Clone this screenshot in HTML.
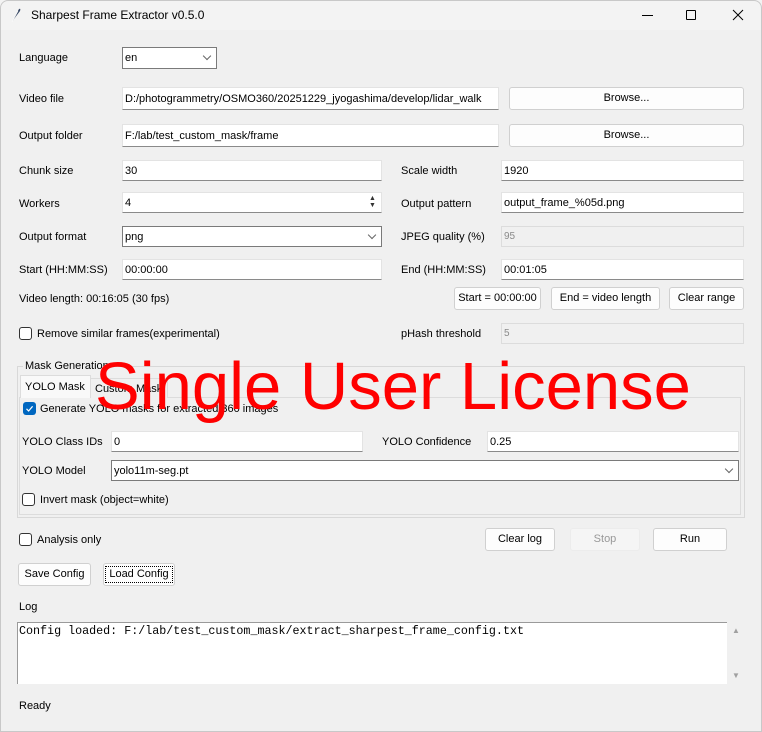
<!DOCTYPE html>
<html><head><meta charset="utf-8"><style>
*{box-sizing:border-box;margin:0;padding:0}
body{width:762px;height:732px;background:#f0f0f0;font-family:"Liberation Sans",sans-serif;font-size:11px;color:#000;position:relative;overflow:hidden}
.a{position:absolute;white-space:nowrap}
.l{position:absolute;white-space:nowrap;line-height:14px}
.e{position:absolute;background:#fff;border:1px solid #e3e3e3;border-bottom:1px solid #8a8a8a;padding-left:2px;padding-top:1px;line-height:18px;font-size:11px;overflow:hidden;white-space:nowrap}
.d{background:#f0f0f0;border:1px solid #dcdcdc;color:#8a8a8a}
.c{position:absolute;background:#fff;border:1px solid #7a7a7a;padding-left:2px;padding-top:1px;line-height:18px;overflow:hidden;white-space:nowrap}
.c:after{content:"";position:absolute;right:6px;top:5px;width:5px;height:5px;border-right:1px solid #666;border-bottom:1px solid #666;transform:rotate(45deg)}
.b{position:absolute;background:#fdfdfd;border:1px solid #d0d0d0;border-radius:3px;text-align:center;line-height:21px;white-space:nowrap}
.cb{position:absolute;width:13px;height:13px;border:1px solid #333;border-radius:3px;background:#fff}
</style></head><body>
<div class="a" style="left:0;top:0;width:762px;height:30px;background:#f3f3f3"></div>
<svg class="a" style="left:10px;top:7px" width="12" height="16" viewBox="0 0 12 16"><path d="M2 15 L9 2 Q11 1 10 4 L4 12 Z" fill="#3a4a66"/><path d="M2 15 L8 4" stroke="#fff" stroke-width="0.6"/></svg>
<div class="l" style="left:31px;top:8px;font-size:12px">Sharpest Frame Extractor v0.5.0</div>
<div class="a" style="left:642px;top:15px;width:11px;height:1px;background:#000"></div>
<div class="a" style="left:686px;top:10px;width:10px;height:10px;border:1px solid #000;border-radius:1px"></div>
<svg class="a" style="left:732px;top:9px" width="12" height="12"><path d="M1 1L11 11M11 1L1 11" stroke="#000" stroke-width="1"/></svg>

<div class="l" style="left:19px;top:51px">Language</div>
<div class="c" style="left:122px;top:47px;width:95px;height:22px">en</div>

<div class="l" style="left:19px;top:92px">Video file</div>
<div class="e" style="left:122px;top:87px;width:377px;height:23px;line-height:20px">D:/photogrammetry/OSMO360/20251229_jyogashima/develop/lidar_walk</div>
<div class="b" style="left:509px;top:87px;width:235px;height:23px">Browse...</div>

<div class="l" style="left:19px;top:129px">Output folder</div>
<div class="e" style="left:122px;top:124px;width:377px;height:23px;line-height:20px">F:/lab/test_custom_mask/frame</div>
<div class="b" style="left:509px;top:124px;width:235px;height:23px">Browse...</div>

<div class="l" style="left:19px;top:164px">Chunk size</div>
<div class="e" style="left:122px;top:160px;width:260px;height:21px">30</div>
<div class="l" style="left:401px;top:164px">Scale width</div>
<div class="e" style="left:501px;top:160px;width:243px;height:21px">1920</div>

<div class="l" style="left:19px;top:197px">Workers</div>
<div class="e" style="left:122px;top:192px;width:260px;height:21px">4</div>
<div class="a" style="left:369px;top:195px;font-size:7px;line-height:7px;color:#333">▲<br>▼</div>
<div class="l" style="left:401px;top:197px">Output pattern</div>
<div class="e" style="left:501px;top:192px;width:243px;height:21px">output_frame_%05d.png</div>

<div class="l" style="left:19px;top:230px">Output format</div>
<div class="c" style="left:122px;top:226px;width:260px;height:21px">png</div>
<div class="l" style="left:401px;top:230px">JPEG quality (%)</div>
<div class="e d" style="left:501px;top:226px;width:243px;height:21px;font-size:10px">95</div>

<div class="l" style="left:19px;top:263px">Start (HH:MM:SS)</div>
<div class="e" style="left:122px;top:259px;width:260px;height:21px">00:00:00</div>
<div class="l" style="left:401px;top:263px">End (HH:MM:SS)</div>
<div class="e" style="left:501px;top:259px;width:243px;height:21px">00:01:05</div>

<div class="l" style="left:19px;top:292px">Video length: 00:16:05 (30 fps)</div>
<div class="b" style="left:454px;top:287px;width:87px;height:23px">Start = 00:00:00</div>
<div class="b" style="left:551px;top:287px;width:109px;height:23px">End = video length</div>
<div class="b" style="left:669px;top:287px;width:75px;height:23px">Clear range</div>

<div class="cb" style="left:19px;top:327px"></div>
<div class="l" style="left:37px;top:327px">Remove similar frames(experimental)</div>
<div class="l" style="left:401px;top:327px">pHash threshold</div>
<div class="e d" style="left:501px;top:323px;width:243px;height:21px;font-size:10px">5</div>

<div class="a" style="left:17px;top:366px;width:728px;height:152px;border:1px solid #d8d8d8"></div>
<div class="l" style="left:23px;top:359px;background:#f0f0f0;padding:0 2px">Mask Generation</div>
<div class="a" style="left:19px;top:397px;width:722px;height:118px;border:1px solid #dcdcdc;background:#f0f0f0"></div>
<div class="a" style="left:90px;top:378px;width:78px;height:20px;border:1px solid #dcdcdc;border-bottom:none;background:#f0f0f0"></div>
<div class="l" style="left:95px;top:382px">Custom Mask</div>
<div class="a" style="left:20px;top:375px;width:71px;height:23px;border:1px solid #dcdcdc;border-bottom:none;background:#f9f9f9"></div>
<div class="l" style="left:25px;top:380px">YOLO Mask</div>
<div class="a" style="left:23px;top:402px;width:13px;height:13px;border-radius:3px;background:#0067c0"></div>
<svg class="a" style="left:23px;top:402px" width="13" height="13"><path d="M3.5 6.8L5.6 9L9.6 4.3" stroke="#fff" stroke-width="1.2" fill="none"/></svg>
<div class="l" style="left:40px;top:402px">Generate YOLO masks for extracted 360 images</div>

<div class="l" style="left:22px;top:435px">YOLO Class IDs</div>
<div class="e" style="left:111px;top:431px;width:252px;height:21px">0</div>
<div class="l" style="left:382px;top:435px">YOLO Confidence</div>
<div class="e" style="left:487px;top:431px;width:252px;height:21px">0.25</div>
<div class="l" style="left:22px;top:464px">YOLO Model</div>
<div class="c" style="left:111px;top:460px;width:628px;height:21px">yolo11m-seg.pt</div>
<div class="cb" style="left:22px;top:493px"></div>
<div class="l" style="left:40px;top:493px">Invert mask (object=white)</div>

<div class="cb" style="left:19px;top:533px"></div>
<div class="l" style="left:37px;top:533px">Analysis only</div>
<div class="b" style="left:485px;top:528px;width:70px;height:23px">Clear log</div>
<div class="b" style="left:570px;top:528px;width:70px;height:23px;background:#f5f5f5;border-color:#ececec;color:#999">Stop</div>
<div class="b" style="left:653px;top:528px;width:74px;height:23px">Run</div>

<div class="b" style="left:18px;top:563px;width:73px;height:23px">Save Config</div>
<div class="b" style="left:103px;top:563px;width:72px;height:23px"></div>
<div class="a" style="left:105px;top:566px;width:68px;height:17px;border:1px dotted #000;text-align:center;line-height:15px">Load Config</div>

<div class="l" style="left:19px;top:600px">Log</div>
<div class="a" style="left:17px;top:622px;width:710px;height:62px;background:#fff;border-top:1px solid #9a9a9a;border-left:1px solid #9a9a9a"></div>
<div class="a" style="left:19px;top:623px;font-family:'Liberation Mono',monospace;font-size:11.7px;line-height:16px">Config loaded: F:/lab/test_custom_mask/extract_sharpest_frame_config.txt</div>
<div class="a" style="left:732px;top:626px;font-size:8px;color:#a0a0a0">▲</div>
<div class="a" style="left:732px;top:671px;font-size:8px;color:#a0a0a0">▼</div>

<div class="l" style="left:19px;top:699px">Ready</div>

<div class="a" style="left:95px;top:352px;font-size:67px;line-height:70px;color:#ff0000">Single User License</div>
<div class="a" style="left:0;top:0;width:762px;height:732px;border:1px solid #c8c8c8;border-radius:8px 8px 0 0"></div>
</body></html>
